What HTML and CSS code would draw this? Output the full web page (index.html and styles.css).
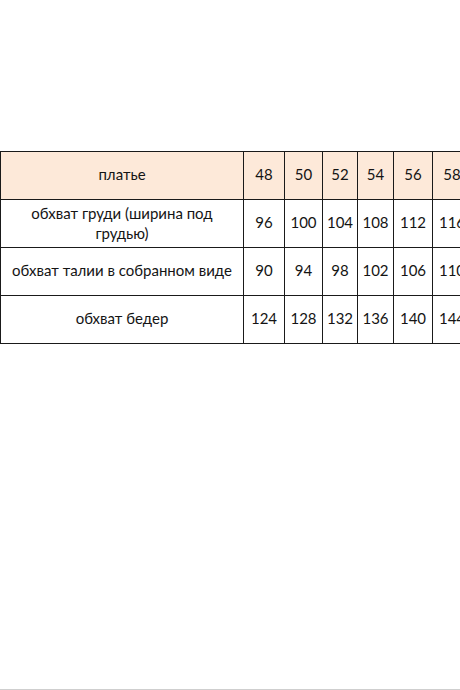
FILE: index.html
```html
<!DOCTYPE html>
<html lang="ru">
<head>
<meta charset="utf-8">
<link rel="stylesheet" href="styles.css">
</head>
<body>
<div class="page">
  <table class="sizes">
    <colgroup>
      <col class="c-name">
      <col class="c1"><col class="c2"><col class="c3"><col class="c4"><col class="c5"><col class="c6">
    </colgroup>
    <tr class="head">
      <td>платье</td><td>48</td><td>50</td><td>52</td><td>54</td><td>56</td><td>58</td>
    </tr>
    <tr>
      <td class="two">обхват груди (ширина под грудью)</td><td>96</td><td>100</td><td>104</td><td>108</td><td>112</td><td>116</td>
    </tr>
    <tr>
      <td>обхват талии в собранном виде</td><td>90</td><td>94</td><td>98</td><td>102</td><td>106</td><td>110</td>
    </tr>
    <tr>
      <td>обхват бедер</td><td>124</td><td>128</td><td>132</td><td>136</td><td>140</td><td>144</td>
    </tr>
  </table>
</div>
<div class="bottom-line"></div>
</body>
</html>
```
FILE: styles.css
```css
html, body {
  margin: 0;
  padding: 0;
  overflow: hidden;
  background: #fff;
  width: 460px;
  height: 690px;
}
body {
  font-family: Lato, "Liberation Sans", sans-serif;
  color: #141414;
  position: relative;
}
.page {
  padding-top: 151px;
  padding-left: 0;
  width: 520px;
}
.sizes {
  border-collapse: collapse;
  table-layout: fixed;
  width: 471px;
}
.c-name { width: 243px; }
.c1 { width: 41px; }
.c2 { width: 38px; }
.c3 { width: 35px; }
.c4 { width: 36px; }
.c5 { width: 39px; }
.c6 { width: 39px; }
.sizes td {
  border: 1px solid #1a1a1a;
  height: 44px;
  padding: 0 2px 3px;
  text-align: center;
  vertical-align: middle;
  font-size: 15px;
  line-height: 20px;
  white-space: nowrap;
  overflow: hidden;
}
.sizes td.two {
  white-space: normal;
  padding: 0 26px 1px;
}
.head td {
  background: #fde9d9;
}
.bottom-line {
  position: absolute;
  left: 0;
  right: 0;
  bottom: 0;
  height: 1px;
  background: #cfcfcf;
}
```
